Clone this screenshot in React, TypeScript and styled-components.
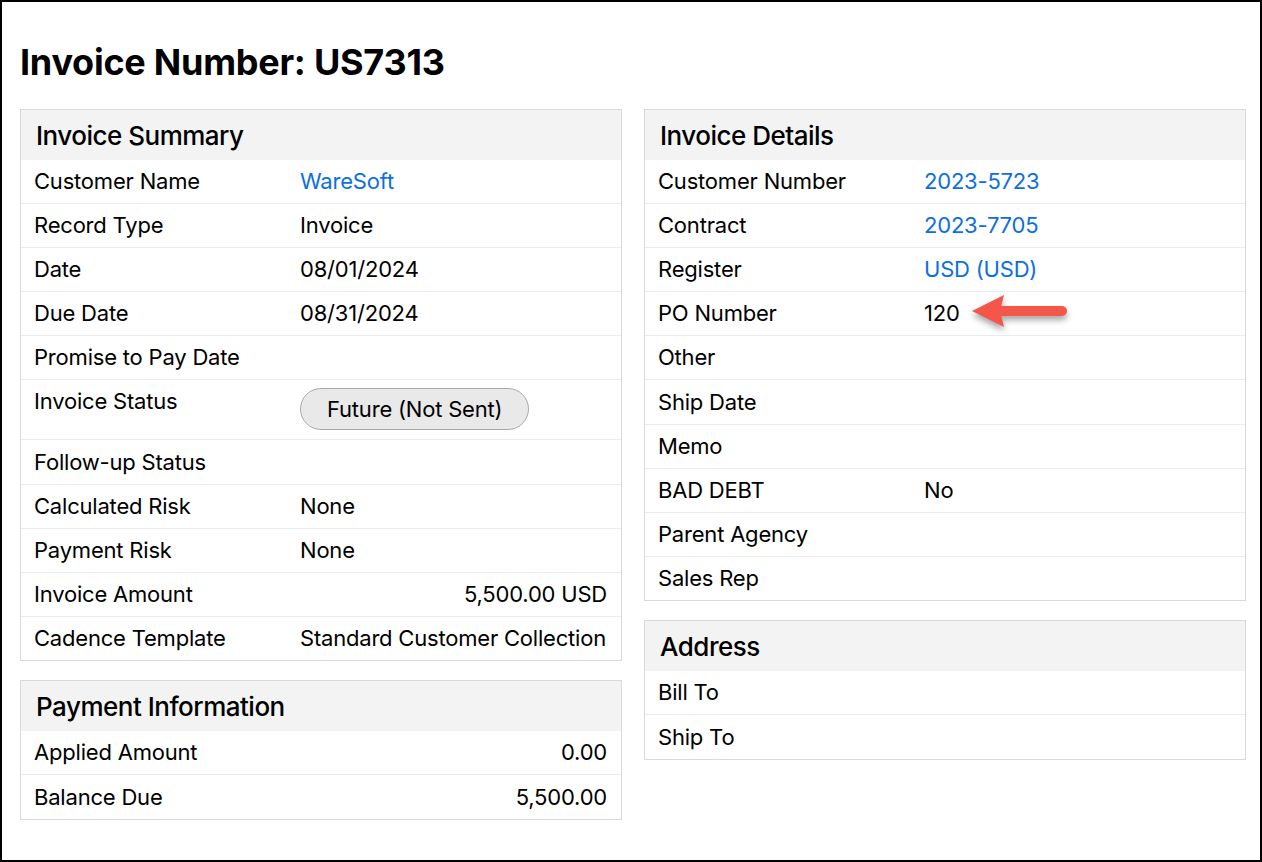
import React from "react";
import styled, { createGlobalStyle } from "styled-components";

const Global = createGlobalStyle`
  html, body { margin: 0; padding: 0; background: #fff; }
  body { font-family: Inter, "Noto Sans", sans-serif; color: #000; }
  * { box-sizing: border-box; }
`;

const Frame = styled.div`
  width: 1262px;
  height: 862px;
  border: 2px solid #000;
  padding: 0 14px 0 18px;
  background: #fff;
`;

const Title = styled.h1`
  margin: 38px 0 25px;
  font-size: 36px;
  line-height: 44px;
  font-weight: 700;
  letter-spacing: -0.25px;
`;

const Columns = styled.div`
  display: grid;
  grid-template-columns: 602px 602px;
  column-gap: 22px;
  align-items: start;
`;

const Column = styled.div`
  display: flex;
  flex-direction: column;
  gap: 19px;
`;

const Panel = styled.section`
  border: 1px solid #d9d9d9;
  background: #fff;
`;

const PanelHeader = styled.h2`
  margin: 0;
  height: 50px;
  display: flex;
  align-items: center;
  padding: 0 15px;
  background: #f3f3f3;
  font-size: 26px;
  font-weight: 500;
  letter-spacing: -0.5px;
`;

const Row = styled.div<{ $tall?: boolean }>`
  display: grid;
  grid-template-columns: 266px 1fr;
  align-items: ${(p) => (p.$tall ? "start" : "center")};
  min-height: ${(p) => (p.$tall ? "60px" : "44.1px")};
  padding: ${(p) => (p.$tall ? "8px 14px 9px 13px" : "0 14px 1px 13px")};
  border-bottom: 1px solid #ebebeb;
  font-size: 22px;
  line-height: 26px;
  letter-spacing: -0.2px;
  &:last-child {
    border-bottom: none;
    min-height: 43.5px;
  }
`;

const Label = styled.div``;

const Value = styled.div<{ $link?: boolean; $right?: boolean }>`
  position: relative;
  color: ${(p) => (p.$link ? "#0b6fe2" : "#000")};
  text-align: ${(p) => (p.$right ? "right" : "left")};
  white-space: nowrap;
`;

const Pill = styled.span`
  display: inline-flex;
  align-items: center;
  height: 42px;
  padding: 0 26px;
  border-radius: 21px;
  background: #e9e9e9;
  border: 1px solid #a9a9a9;
  font-size: 22px;
`;

const Arrow = styled.svg`
  position: absolute;
  left: 48px;
  top: 50%;
  margin-top: -18px;
  overflow: visible;
  filter: drop-shadow(0 4px 3px rgba(0, 0, 0, 0.35));
`;

type Item = {
  label: string;
  value?: string;
  link?: boolean;
  right?: boolean;
  pill?: boolean;
  arrow?: boolean;
};

const summary: Item[] = [
  { label: "Customer Name", value: "WareSoft", link: true },
  { label: "Record Type", value: "Invoice" },
  { label: "Date", value: "08/01/2024" },
  { label: "Due Date", value: "08/31/2024" },
  { label: "Promise to Pay Date" },
  { label: "Invoice Status", value: "Future (Not Sent)", pill: true },
  { label: "Follow-up Status" },
  { label: "Calculated Risk", value: "None" },
  { label: "Payment Risk", value: "None" },
  { label: "Invoice Amount", value: "5,500.00 USD", right: true },
  { label: "Cadence Template", value: "Standard Customer Collection" },
];

const payment: Item[] = [
  { label: "Applied Amount", value: "0.00", right: true },
  { label: "Balance Due", value: "5,500.00", right: true },
];

const details: Item[] = [
  { label: "Customer Number", value: "2023-5723", link: true },
  { label: "Contract", value: "2023-7705", link: true },
  { label: "Register", value: "USD (USD)", link: true },
  { label: "PO Number", value: "120", arrow: true },
  { label: "Other" },
  { label: "Ship Date" },
  { label: "Memo" },
  { label: "BAD DEBT", value: "No" },
  { label: "Parent Agency" },
  { label: "Sales Rep" },
];

const address: Item[] = [{ label: "Bill To" }, { label: "Ship To" }];

const PointerArrow = () => (
  <Arrow width="100" height="36" viewBox="0 0 100 36">
    <line x1="26" y1="16" x2="90" y2="16" stroke="#f4574a" strokeWidth="10" strokeLinecap="round" />
    <polygon points="0,16 32,0 28,16 32,32" fill="#f4574a" />
  </Arrow>
);

const Rows = ({ items }: { items: Item[] }) => (
  <>
    {items.map((it) => (
      <Row key={it.label} $tall={it.pill}>
        <Label>{it.label}</Label>
        <Value $link={it.link} $right={it.right}>
          {it.pill ? <Pill>{it.value}</Pill> : it.value}
          {it.arrow && <PointerArrow />}
        </Value>
      </Row>
    ))}
  </>
);

export default function App() {
  return (
    <>
      <Global />
      <Frame>
        <Title>Invoice Number: US7313</Title>
        <Columns>
          <Column>
            <Panel>
              <PanelHeader>Invoice Summary</PanelHeader>
              <Rows items={summary} />
            </Panel>
            <Panel>
              <PanelHeader>Payment Information</PanelHeader>
              <Rows items={payment} />
            </Panel>
          </Column>
          <Column>
            <Panel>
              <PanelHeader>Invoice Details</PanelHeader>
              <Rows items={details} />
            </Panel>
            <Panel>
              <PanelHeader>Address</PanelHeader>
              <Rows items={address} />
            </Panel>
          </Column>
        </Columns>
      </Frame>
    </>
  );
}
